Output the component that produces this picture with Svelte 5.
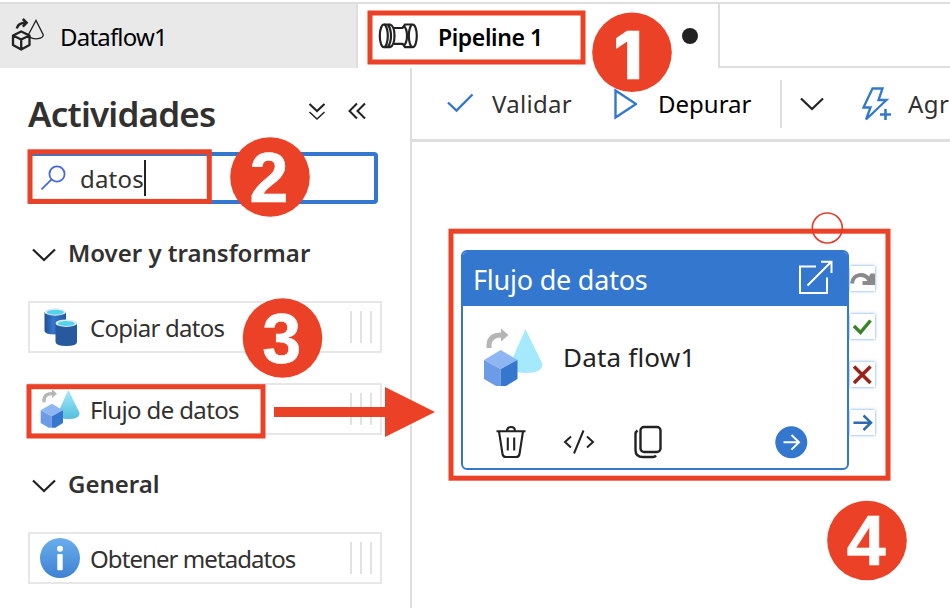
<script>
  const groups = [
    {
      title: 'Mover y transformar',
      cls: 'move',
      items: [
        { label: 'Copiar datos', icon: 'copy', cls: 't-copy' },
        { label: 'Flujo de datos', icon: 'flow', cls: 't-flow' }
      ]
    },
    {
      title: 'General',
      cls: 'general',
      items: [{ label: 'Obtener metadatos', icon: 'info', cls: 't-info' }]
    }
  ];

  const steps = [
    { n: 1, x: 632, y: 52.3, tx: 628 },
    { n: 2, x: 270, y: 177, tx: 269 },
    { n: 3, x: 282.5, y: 338, tx: 281.8 },
    { n: 4, x: 867, y: 540.5, tx: 866.3 }
  ];

  const frames = [
    { x: 370, y: 13, w: 213, h: 49 },
    { x: 30, y: 151.8, w: 179.3, h: 49.6 },
    { x: 29, y: 386.7, w: 234, h: 49.3 },
    { x: 451, y: 231.2, w: 437, h: 247 }
  ];
</script>

{#snippet flowIcon(size)}
  <svg class="flow-ico" width={size} height={size} viewBox="0 0 60 60" aria-hidden="true">
    <defs>
      <linearGradient id="cone{size}" x1="0" y1="0" x2="0" y2="1">
        <stop offset="0" stop-color="#a5ebfd" />
        <stop offset="1" stop-color={size > 50 ? '#a5e8fc' : '#55bfdc'} />
      </linearGradient>
    </defs>
    <path d="M42.500 1 L59.500 36 Q59.500 45 42.500 45 Q27 45 27 36 Z" fill="url(#cone{size})" />
    <path d="M3.500 20 V17 Q4 4.500 18 4.500 V0.500 L25.500 7 L18 13.500 V9.500 Q9 9.500 8.500 17 V20 Z" fill="#b5b5b5" />
    <path d="M1 32 L17.700 22 L34.500 32 L17.700 41 Z" fill="#8fb6f3" />
    <path d="M1 32 L17.700 41 V58 L13 58 L1 51 Z" fill="#6c9ce8" />
    <path d="M34.500 32 L17.700 41 V58 L23 58 L34.500 51 Z" fill="#3677cd" />
  </svg>
{/snippet}

<div class="app">
  <header class="tabs">
    <div class="tab idle">
      <svg class="df-ico" width="34" height="34" viewBox="0 0 34 34" fill="none" stroke="#222" aria-hidden="true">
        <path d="M2 17.500 L10.200 13.500 L18.500 17.500 V27 L10.200 31.500 L2 27 Z M2 17.500 L10.200 21.500 L18.500 17.500 M10.200 21.500 V31" stroke-width="2.300" stroke-linejoin="round" />
        <path d="M5.800 10.500 Q7 4.800 14.500 4.800 M11.800 1 L15.600 4.800 L11.800 8.600" stroke-width="2.500" />
        <path d="M17.500 16.500 L25 2.500 L32.300 17 C32 21 23 22 18.800 19" stroke-width="1.300" />
      </svg>
      <span class="t-df">Dataflow1</span>
    </div>
    <div class="tab active">
      <svg class="pipe-ico" width="40" height="28" viewBox="0 0 40 28" fill="none" stroke="#222" stroke-width="2.200" aria-hidden="true">
        <ellipse cx="5.800" cy="13.800" rx="4" ry="11.300" />
        <path d="M6 2.500 H12 Q16.500 4 16.500 13.800 Q16.500 23.600 12 25.100 H6 M10 3 Q13 7 13 13.800 Q13 20.600 10 24.600" />
        <path d="M16 6 H25 M16 21.800 H25" />
        <path d="M34 2.500 H27 L24.500 6 M34 25.100 H27 L24.500 21.600 M26 4 Q29 7 29 13.800 Q29 20.600 26 23.600" />
        <ellipse cx="34.800" cy="13.800" rx="4" ry="11.300" />
      </svg>
      <span class="t-pipe">Pipeline 1</span>
      <i class="dirty"></i>
    </div>
    <div class="rest"></div>
  </header>

  <div class="body">
    <aside>
      <div class="heading">
        <h1>Actividades</h1>
        <svg class="dbl-down" width="18" height="18" viewBox="0 0 18 18" fill="none" stroke="#222" aria-hidden="true">
          <path d="M1.500 1 L9 8 L16.500 1" stroke-width="2.100" /><path d="M1.500 9 L9 16 L16.500 9" stroke-width="1.500" />
        </svg>
        <svg class="dbl-left" width="18" height="18" viewBox="0 0 18 18" fill="none" stroke="#222" stroke-width="2" aria-hidden="true">
          <path d="M9 1.500 L1.500 9 L9 16.500 M17 1.500 L9.500 9 L17 16.500" />
        </svg>
      </div>
      <div class="search">
        <svg width="26" height="26" viewBox="0 0 26 26" fill="none" stroke="#4468dd" stroke-width="1.800" aria-hidden="true">
          <circle cx="17" cy="9" r="7.600" /><path d="M11.600 14.400 L1.500 24.300" />
        </svg>
        <span class="t-search">datos</span><i class="caret"></i>
      </div>

      {#each groups as g}
        <section class={g.cls}>
          <h2>
            <svg width="24" height="14" viewBox="0 0 24 14" fill="none" stroke="#222" stroke-width="2.200" aria-hidden="true">
              <path d="M1 1.500 L12 12 L23 1.500" />
            </svg>
            <span>{g.title}</span>
          </h2>
          {#each g.items as it}
            <div class="item">
              <div class="ico {it.icon}">
                {#if it.icon === 'copy'}
                  <svg width="34" height="38" viewBox="0 0 34 38" aria-hidden="true">
                    <defs>
                      <linearGradient id="c1"><stop offset="0" stop-color="#1f4f91" /><stop offset=".4" stop-color="#3576cb" /><stop offset="1" stop-color="#2457a0" /></linearGradient>
                    </defs>
                    <path d="M0.500 4 V23 Q1 26.500 11.500 26.500 Q22 26.500 22 23 V4 Z" fill="url(#c1)" />
                    <ellipse cx="11.300" cy="4" rx="10.800" ry="3.700" fill="#e4eaf2" /><ellipse cx="11.300" cy="4.300" rx="8.500" ry="2.500" fill="#53d4ee" />
                    <path d="M11.500 15 V34 Q12 38 22.300 38 Q33 38 33 34 V15 Z" fill="#27599f" />
                    <ellipse cx="22.300" cy="15.200" rx="10.800" ry="3.700" fill="#e4eaf2" /><ellipse cx="22.300" cy="15.500" rx="8.500" ry="2.500" fill="#53d4ee" />
                  </svg>
                {:else if it.icon === 'flow'}
                  {@render flowIcon(40)}
                {:else}
                  <svg width="40" height="40" viewBox="0 0 40 40" aria-hidden="true">
                    <defs><linearGradient id="inf" x1="0" y1="0" x2="0" y2="1"><stop offset="0" stop-color="#6aaeee" /><stop offset="1" stop-color="#3d81d2" /></linearGradient></defs>
                    <circle cx="20" cy="20" r="20" fill="url(#inf)" />
                    <circle cx="20" cy="10.800" r="3" fill="#fff" /><rect x="17.300" y="16" width="5.400" height="16.200" rx=".8" fill="#fff" />
                  </svg>
                {/if}
              </div>
              <span class={it.cls}>{it.label}</span>
              <div class="grip"><i></i><i></i><i></i></div>
            </div>
          {/each}
        </section>
      {/each}
    </aside>

    <main>
      <nav>
        <svg class="check" width="27" height="20" viewBox="0 0 27 20" fill="none" stroke="#3477ce" stroke-width="2.400" aria-hidden="true">
          <path d="M1 9.500 L9.500 17.500 L25.500 1.500" />
        </svg>
        <span class="t-val">Validar</span>
        <svg class="play" width="24" height="32" viewBox="0 0 24 32" fill="none" stroke="#3477ce" stroke-width="2.400" aria-hidden="true">
          <path d="M2.500 2.500 L23 16 L2.500 29.500 Z" />
        </svg>
        <span class="t-dep">Depurar</span>
        <i class="sep"></i>
        <svg class="down" width="24" height="14" viewBox="0 0 24 14" fill="none" stroke="#222" stroke-width="2.200" aria-hidden="true">
          <path d="M1 1.500 L12 12 L23 1.500" />
        </svg>
        <svg class="bolt" width="30" height="34" viewBox="0 0 30 34" fill="none" stroke="#3477ce" stroke-width="2.300" aria-hidden="true">
          <path d="M10.500 1.500 H20.500 L16.500 13 H24.500 L4 32.500 L8.500 20.500 H1.500 Z" />
          <path d="M23.500 22 V33 M18 27.500 H29" stroke-width="2.600" />
        </svg>
        <span class="t-agr">Agregar</span>
      </nav>

      <div class="canvas">
        <article class="node">
          <div class="node-head">
            <span class="t-nh">Flujo de datos</span>
            <svg width="36" height="36" viewBox="0 0 36 36" fill="none" stroke="#fff" stroke-width="2" aria-hidden="true">
              <path d="M18 6.500 H2 V33 H29 V17.500 M9.500 25.500 L33 2 M23 1.800 H33.500 V13" />
            </svg>
          </div>
          <div class="node-body">
            {@render flowIcon(60)}
            <span class="t-nb">Data flow1</span>
          </div>
          <div class="node-foot">
            <svg class="trash" width="30" height="34" viewBox="0 0 30 34" fill="none" stroke="#222" stroke-width="2.100" aria-hidden="true">
              <path d="M0.500 6.200 H29.500 M11 6 Q11 2 15 2 Q19 2 19 6 M3 6.500 L6.500 29 Q7 32 10 32 H20 Q23 32 23.500 29 L27 6.500 M11.800 12.500 V25.500 M18.200 12.500 V25.500" />
            </svg>
            <svg class="code" width="32" height="24" viewBox="0 0 32 24" fill="none" stroke="#222" stroke-width="2" aria-hidden="true">
              <path d="M8 6.500 L2 12 L8 17.500 M24 6.500 L30 12 L24 17.500 M20.500 0.500 L11 23.500" />
            </svg>
            <svg class="dup" width="28" height="34" viewBox="0 0 28 34" fill="none" stroke="#222" stroke-width="2.400" aria-hidden="true">
              <rect x="6.500" y="2" width="20" height="25" rx="3.500" />
              <path d="M3.500 5.500 Q1.500 7 1.500 9 V25 Q1.500 32 9 32 H19 Q21 32 22 30.500" />
            </svg>
            <svg class="go" width="33" height="33" viewBox="0 0 33 33" fill="none" stroke="#fff" stroke-width="2" aria-hidden="true">
              <circle cx="16.300" cy="16.300" r="16" fill="#3477ce" stroke="none" /><path d="M8.500 16.300 H24 M16.500 9 L24 16.300 L16.500 23.600" />
            </svg>
          </div>
        </article>
        <div class="ports">
          <div class="port">
            <svg width="25" height="25" viewBox="0 0 25 25" fill="none" stroke="#8a8a8a" stroke-width="4"><path d="M2 17.500 C3 7.500 14 6.500 19 13.500" /><path d="M20.500 7.500 H25 V19 H12.500 V15 H17 Z" fill="#8a8a8a" stroke="none" /></svg>
          </div>
          <div class="port">
            <svg width="25" height="25" viewBox="0 0 25 25" fill="none" stroke="#3b832b" stroke-width="3.500"><path d="M4 12 L10.500 18.500 L20.500 6.500" /></svg>
          </div>
          <div class="port">
            <svg width="25" height="25" viewBox="0 0 25 25" fill="none" stroke="#9d2117" stroke-width="3.500"><path d="M4 4.500 L20.500 21 M20.500 4.500 L4 21" /></svg>
          </div>
          <div class="port">
            <svg width="25" height="25" viewBox="0 0 25 25" fill="none" stroke="#2d69b6" stroke-width="2.500"><path d="M3.500 12.700 H21 M13.500 5.500 L21 12.700 L13.500 20" /></svg>
          </div>
        </div>
      </div>
    </main>
  </div>

  <svg class="marks" width="950" height="608" viewBox="0 0 950 608" aria-hidden="true">
    {#each frames as f}
      <rect x={f.x} y={f.y} width={f.w} height={f.h} fill="none" stroke="#eb4126" stroke-width="5" />
    {/each}
    <path d="M274 407 H385 V387 L435 412 L385 437 V417 H274 Z" fill="#eb4126" />
    <circle cx="827.300" cy="228" r="15" fill="none" stroke="#e63a2a" stroke-width="1.600" />
    {#each steps as s}
      <circle cx={s.x} cy={s.y} r="39.800" fill="#eb4126" />
      <text class:one={s.n === 1} x={s.tx} y={s.y + (s.n === 1 ? 26.5 : 24.5)} text-anchor="middle">{s.n}</text>
    {/each}
  </svg>
</div>

<style>
  :global(body) { margin: 0; overflow: hidden; background: #fff; }
  .app { position: relative; width: 950px; height: 608px; overflow: hidden; background: #fff; display: flex; flex-direction: column; font-family: 'Noto Sans', 'Open Sans', sans-serif; font-size: 24px; color: #323130; }
  .app *, .app { box-sizing: border-box; }
  svg { display: block; flex: none; }
  span { white-space: nowrap; display: block; flex: none; }
  h1, h2 { margin: 0; font-weight: 600; white-space: nowrap; flex: none; }

  .tabs { display: flex; height: 66px; margin-top: 2px; border-top: 2px solid #dedede; flex: none; color: #000; }
  .tab { display: flex; align-items: center; border-right: 2px solid #dedede; flex: none; }
  .idle { width: 358px; background: #e9e9e9; padding-left: 11px; }
  .df-ico { margin: 0 14px 2px 0; }
  .t-df { letter-spacing: -0.8px; padding-left: 1px; }
  .active { width: 362px; padding-left: 20px; }
  .pipe-ico { margin-right: 20px; }
  .t-pipe { width: 110px; font-weight: 600; font-size: 23px; letter-spacing: -0.4px; padding-top: 2px; }
  .dirty { width: 16px; height: 16px; border-radius: 50%; background: #222; margin-left: 134px; flex: none; }
  .rest { flex: 1; border-bottom: 2px solid #dedede; }

  .body { display: flex; flex: 1; min-height: 0; }
  aside { width: 412px; border-right: 2px solid #dedede; padding-left: 28px; flex: none; }
  .heading { display: flex; align-items: center; height: 84px; padding-top: 8px; }
  h1 { font-size: 35px; line-height: 40px; width: 280px; letter-spacing: -0.8px; }
  .dbl-down { margin-bottom: 4px; }
  .dbl-left { margin: 0 0 6px 22px; }
  .search { display: flex; align-items: center; width: 350px; height: 52px; border: 4px solid #3477ce; border-radius: 4px; padding-left: 8px; }
  .t-search { margin-left: 14px; letter-spacing: 0.2px; }
  .caret { width: 2px; height: 36px; background: #222; }
  h2 { display: flex; align-items: center; height: 32px; font-size: 24px; line-height: 32px; padding-left: 4px; }
  h2 svg { margin: 4px 12px 0 0; }
  .move { margin-top: 33px; }
  .general { margin-top: 33px; }
  .item { display: flex; align-items: center; width: 354px; height: 52px; border: 2px solid #e7e7e7; margin-bottom: 30px; }
  .move h2 { margin-bottom: 32px; }
  .move .item:last-child { margin-bottom: 0; }
  .general h2 { margin-bottom: 32px; }
  .ico { width: 60px; display: flex; flex: none; padding-left: 10px; }
  .ico.copy { padding-left: 14px; }
  .t-copy { letter-spacing: -0.74px; }
  .t-flow { letter-spacing: -0.64px; }
  .t-info { letter-spacing: -0.93px; }
  .grip { margin-left: auto; display: flex; gap: 8px; padding-right: 8px; }
  .grip i { width: 2px; height: 32px; background: #e2e2e2; }

  main { flex: 1; min-width: 0; display: flex; flex-direction: column; overflow: hidden; }
  nav { height: 74px; flex: none; border-bottom: 3px solid #dedede; display: flex; align-items: center; padding-left: 35px; overflow: hidden; }
  .check { margin-right: 18px; margin-bottom: 2px; }
  .t-val { width: 121px; letter-spacing: 0.3px; }
  .t-dep { width: 122px; color: #000; }
  .play { margin-right: 21px; }
  .sep { width: 2px; height: 48px; background: #dedede; flex: none; margin-right: 18px; }
  .down { margin-right: 38px; }
  .bolt { margin-right: 16px; }
  .t-agr { letter-spacing: 0.5px; }

  .canvas { position: relative; flex: 1; }
  .node { position: absolute; left: 49px; top: 108px; width: 388px; height: 220px; border: 2px solid #3477ce; border-radius: 6px; background: #fff; overflow: hidden; display: flex; flex-direction: column; color: #222; }
  .node-head { height: 54px; background: #3477ce; color: #fff; display: flex; align-items: center; justify-content: space-between; padding: 0 13px 0 10px; font-size: 27px; line-height: 30px; }
  .node-head svg { margin-bottom: 2px; }
  .t-nh { letter-spacing: -0.22px; padding-top: 1px; }
  .node-body { height: 104px; display: flex; align-items: center; padding-left: 20px; font-size: 26px; }
  .t-nb { padding-bottom: 3px; letter-spacing: 0.2px; }
  .node-body .flow-ico { margin-right: 20px; }
  .node-foot { display: flex; align-items: center; height: 58px; padding: 6px 0 0 33px; flex: none; }
  .code { margin-left: 37px; }
  .dup { margin-left: 39px; }
  .go { margin-left: 113px; }
  .ports { position: absolute; left: 438px; top: 123.500px; display: flex; flex-direction: column; gap: 23px; }
  .port { width: 25px; height: 25px; background: #fff; box-shadow: 0 0 3px #5f9fe6; }

  .marks { position: absolute; left: 0; top: 0; }
  .marks text { font: bold 70px 'Liberation Sans', sans-serif; fill: #fff; stroke: #fff; stroke-width: 0.6px; }
  .marks .one { font: 800 66px Inter, sans-serif; }
</style>
